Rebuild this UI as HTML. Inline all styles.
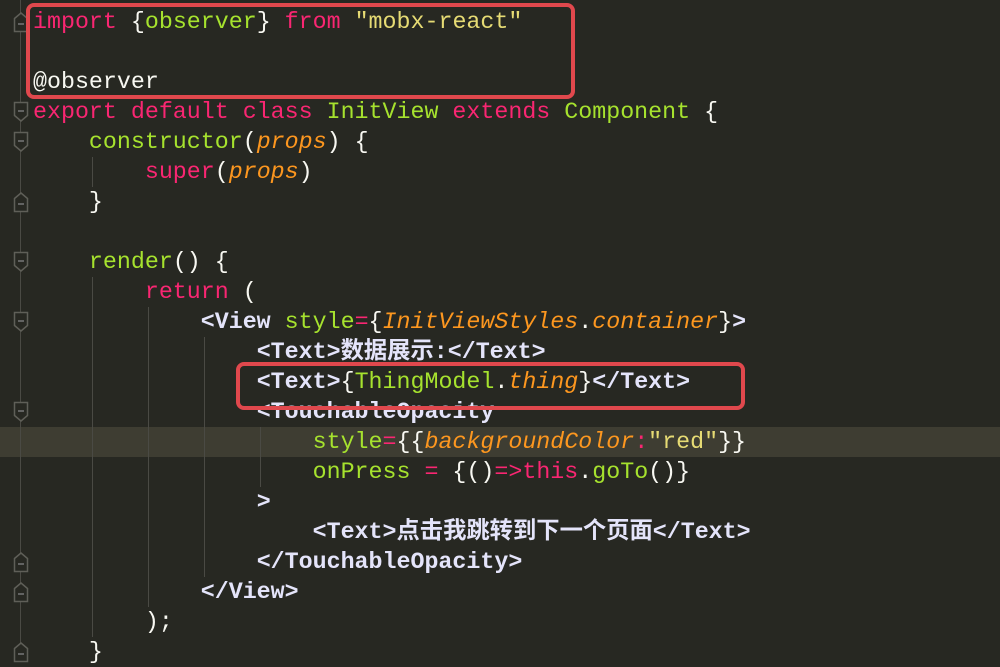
<!DOCTYPE html>
<html><head><meta charset="utf-8"><style>
html,body{margin:0;padding:0;background:#272822;width:1000px;height:658px;overflow:hidden}
.code{position:absolute;left:33px;top:7px;font-family:"Liberation Mono","Noto Sans CJK SC",monospace;font-size:23.3px;line-height:30px;color:#f8f8f2;white-space:pre;letter-spacing:0}
.k{color:#f92672}.g{color:#a6e22e}.y{color:#e6db74}.o{color:#fd971f;font-style:italic}.t{color:#e4e4fa;font-weight:bold}
.hl{position:absolute;left:0;top:427px;width:1000px;height:30px;background:#3e3d32}
.box{position:absolute;border:4px solid #e0484d;border-radius:8px}
.guide{position:absolute;width:1px;background:#4a4a44}
.fold{position:absolute;left:13px}
</style></head><body>
<div class="hl"></div>
<div class="guide" style="left:20px;top:0;height:658px"></div>
<div class="guide" style="left:92px;top:157px;height:30px"></div>
<div class="guide" style="left:92px;top:277px;height:360px"></div>
<div class="guide" style="left:148px;top:307px;height:300px"></div>
<div class="guide" style="left:204px;top:337px;height:240px"></div>
<div class="guide" style="left:260px;top:427px;height:60px"></div>
<svg class="fold" style="top:12px" width="16" height="22"><path d="M1.5 6.5 L8 1 L14.5 6.5 V19.5 H1.5 Z" fill="#272822" stroke="#5f5f58" stroke-width="1.5"/><path d="M5 12 H11" stroke="#777" stroke-width="1.5"/></svg>
<svg class="fold" style="top:101px" width="16" height="22"><path d="M1.5 1.5 H14.5 V14.5 L8 20 L1.5 14.5 Z" fill="#272822" stroke="#5f5f58" stroke-width="1.5"/><path d="M5 10 H11" stroke="#777" stroke-width="1.5"/></svg>
<svg class="fold" style="top:131px" width="16" height="22"><path d="M1.5 1.5 H14.5 V14.5 L8 20 L1.5 14.5 Z" fill="#272822" stroke="#5f5f58" stroke-width="1.5"/><path d="M5 10 H11" stroke="#777" stroke-width="1.5"/></svg>
<svg class="fold" style="top:192px" width="16" height="22"><path d="M1.5 6.5 L8 1 L14.5 6.5 V19.5 H1.5 Z" fill="#272822" stroke="#5f5f58" stroke-width="1.5"/><path d="M5 12 H11" stroke="#777" stroke-width="1.5"/></svg>
<svg class="fold" style="top:251px" width="16" height="22"><path d="M1.5 1.5 H14.5 V14.5 L8 20 L1.5 14.5 Z" fill="#272822" stroke="#5f5f58" stroke-width="1.5"/><path d="M5 10 H11" stroke="#777" stroke-width="1.5"/></svg>
<svg class="fold" style="top:311px" width="16" height="22"><path d="M1.5 1.5 H14.5 V14.5 L8 20 L1.5 14.5 Z" fill="#272822" stroke="#5f5f58" stroke-width="1.5"/><path d="M5 10 H11" stroke="#777" stroke-width="1.5"/></svg>
<svg class="fold" style="top:401px" width="16" height="22"><path d="M1.5 1.5 H14.5 V14.5 L8 20 L1.5 14.5 Z" fill="#272822" stroke="#5f5f58" stroke-width="1.5"/><path d="M5 10 H11" stroke="#777" stroke-width="1.5"/></svg>
<svg class="fold" style="top:552px" width="16" height="22"><path d="M1.5 6.5 L8 1 L14.5 6.5 V19.5 H1.5 Z" fill="#272822" stroke="#5f5f58" stroke-width="1.5"/><path d="M5 12 H11" stroke="#777" stroke-width="1.5"/></svg>
<svg class="fold" style="top:582px" width="16" height="22"><path d="M1.5 6.5 L8 1 L14.5 6.5 V19.5 H1.5 Z" fill="#272822" stroke="#5f5f58" stroke-width="1.5"/><path d="M5 12 H11" stroke="#777" stroke-width="1.5"/></svg>
<svg class="fold" style="top:642px" width="16" height="22"><path d="M1.5 6.5 L8 1 L14.5 6.5 V19.5 H1.5 Z" fill="#272822" stroke="#5f5f58" stroke-width="1.5"/><path d="M5 12 H11" stroke="#777" stroke-width="1.5"/></svg>
<div class="code" style="top:-23px"><span class="g">                        </span></div>
<div class="code"><span class="k">import</span> {<span class="g">observer</span>} <span class="k">from</span> <span class="y">"mobx-react"</span>

@observer
<span class="k">export default class</span> <span class="g">InitView</span> <span class="k">extends</span> <span class="g">Component</span> {
    <span class="g">constructor</span>(<span class="o">props</span>) {
        <span class="k">super</span>(<span class="o">props</span>)
    }

    <span class="g">render</span>() {
        <span class="k">return</span> (
            <span class="t">&lt;View</span> <span class="g">style</span><span class="k">=</span>{<span class="o">InitViewStyles</span>.<span class="o">container</span>}<span class="t">&gt;</span>
                <span class="t">&lt;Text&gt;数据展示:&lt;/Text&gt;</span>
                <span class="t">&lt;Text&gt;</span>{<span class="g">ThingModel</span>.<span class="o">thing</span>}<span class="t">&lt;/Text&gt;</span>
                <span class="t">&lt;TouchableOpacity</span>
                    <span class="g">style</span><span class="k">=</span>{{<span class="o">backgroundColor</span><span class="k">:</span><span class="y">"red"</span>}}
                    <span class="g">onPress</span> <span class="k">=</span> {()<span class="k">=&gt;this</span>.<span class="g">goTo</span>()}
                <span class="t">&gt;</span>
                    <span class="t">&lt;Text&gt;点击我跳转到下一个页面&lt;/Text&gt;</span>
                <span class="t">&lt;/TouchableOpacity&gt;</span>
            <span class="t">&lt;/View&gt;</span>
        );
    }</div>
<div class="box" style="left:26px;top:3px;width:541px;height:88px"></div>
<div class="box" style="left:236px;top:362px;width:501px;height:40px"></div>
</body></html>
